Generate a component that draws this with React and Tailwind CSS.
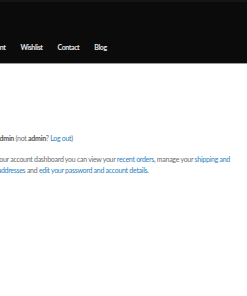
import React from 'react';

const navItems = ['My Account', 'Wishlist', 'Contact', 'Blog'];

export default function App() {
  return (
    <div className="w-[247px] h-[296px] overflow-hidden bg-white font-['Lato',sans-serif]">
      {/* header */}
      <div className="h-[64px] bg-[#0b0b0b] border-t-2 border-[#151515] border-b border-b-[#9a9a9a] flex items-end pb-[12px]">
        <nav className="flex gap-[15px] -ml-[28px] text-[7px] leading-none font-bold tracking-[-0.4px] text-[#e6e6e6] whitespace-nowrap">
          {navItems.map((item) => (
            <span key={item}>{item}</span>
          ))}
        </nav>
      </div>

      {/* account dashboard */}
      <div className="-ml-[20px] pt-[69px] text-[7px] leading-[11px] tracking-[-0.28px] text-[#6b6b6b] whitespace-nowrap">
        <p>
          Hello <b className="text-[#555]">admin</b> (not <b className="text-[#555]">admin</b>?{' '}
          <a className="text-[#2a7fc1]">Log out</a>)
        </p>
        <p className="mt-[10px]">
          From your account dashboard you can view your <a className="text-[#2a7fc1]">recent orders</a>, manage your{' '}
          <a className="text-[#2a7fc1]">shipping and</a>
          <br />
          <a className="text-[#2a7fc1]">billing addresses</a> and{' '}
          <a className="text-[#2a7fc1]">edit your password and account details</a>.
        </p>
      </div>
    </div>
  );
}
